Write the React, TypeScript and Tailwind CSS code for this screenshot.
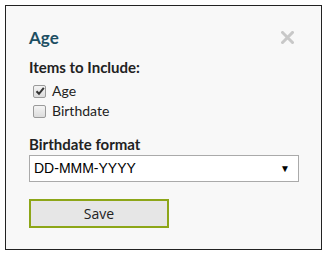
import { useState } from 'react';

function Check({ checked, onChange }: { checked: boolean; onChange: () => void }) {
    return (
        <span
            onClick={onChange}
            className="relative inline-flex w-[13px] h-[13px] rounded-[2px] border border-[#9a9a9a] bg-gradient-to-b from-[#f4f4f4] to-[#dcdcdc]"
        >
            {checked && (
                <svg className="absolute left-[1px] top-[0px]" width="10" height="10" viewBox="0 0 10 10">
                    <path d="M1.5 5.2 L4 7.8 L8.8 1.8" fill="none" stroke="#333" strokeWidth="2" />
                </svg>
            )}
        </span>
    );
}

export default function App() {
    const [age, setAge] = useState(true);
    const [birthdate, setBirthdate] = useState(false);
    const [format, setFormat] = useState('DD-MMM-YYYY');

    return (
        <div className="w-[326px] h-[257px] bg-white p-[5px] pb-[7px] pr-[4px]">
            <div className="h-full border border-[#222] bg-[#f8f8f8] px-[23px] pt-[21px] font-['Lato',sans-serif]">
                {/* Header */}
                <div className="flex items-start justify-between">
                    <h2 className="text-[17px] leading-[22px] font-bold text-[#1d4f63]">Age</h2>
                    <button className="mr-[4px] mt-[4px] text-[#c8c8c8]">
                        <svg width="13" height="13" viewBox="0 0 13 13">
                            <path d="M1.5 1.5 L11.5 11.5 M11.5 1.5 L1.5 11.5" stroke="currentColor" strokeWidth="3" strokeLinecap="square" />
                        </svg>
                    </button>
                </div>

                {/* Items */}
                <div className="mt-[9px] text-[15px] leading-[18px] font-bold text-[#222]">Items to Include:</div>
                <div className="mt-[5px] ml-[4px] flex flex-col text-[14px] leading-[20px] text-[#222]">
                    <label className="flex items-center gap-[6px]">
                        <Check checked={age} onChange={() => setAge(!age)} />
                        Age
                    </label>
                    <label className="flex items-center gap-[6px]">
                        <Check checked={birthdate} onChange={() => setBirthdate(!birthdate)} />
                        Birthdate
                    </label>
                </div>

                {/* Format */}
                <div className="mt-[14px] text-[15px] leading-[18px] font-bold text-[#222]">Birthdate format</div>
                <div className="relative mt-[2px] w-[270px] h-[27px]">
                    <select
                        value={format}
                        onChange={(e) => setFormat(e.target.value)}
                        className="w-full h-full appearance-none border border-[#aaa] bg-white pl-[4px] text-[14px] text-black font-['Liberation_Sans',sans-serif] outline-none"
                    >
                        <option>DD-MMM-YYYY</option>
                        <option>MM/DD/YYYY</option>
                        <option>YYYY-MM-DD</option>
                    </select>
                    <span className="pointer-events-none absolute right-[9px] top-[8px] text-[10px] leading-[10px] text-black">▼</span>
                </div>

                <button className="mt-[17px] w-[140px] h-[29px] border-2 border-[#8da618] bg-[#e6e6e6] text-[14px] text-[#222] font-['Open_Sans',sans-serif]">
                    Save
                </button>
            </div>
        </div>
    );
}
